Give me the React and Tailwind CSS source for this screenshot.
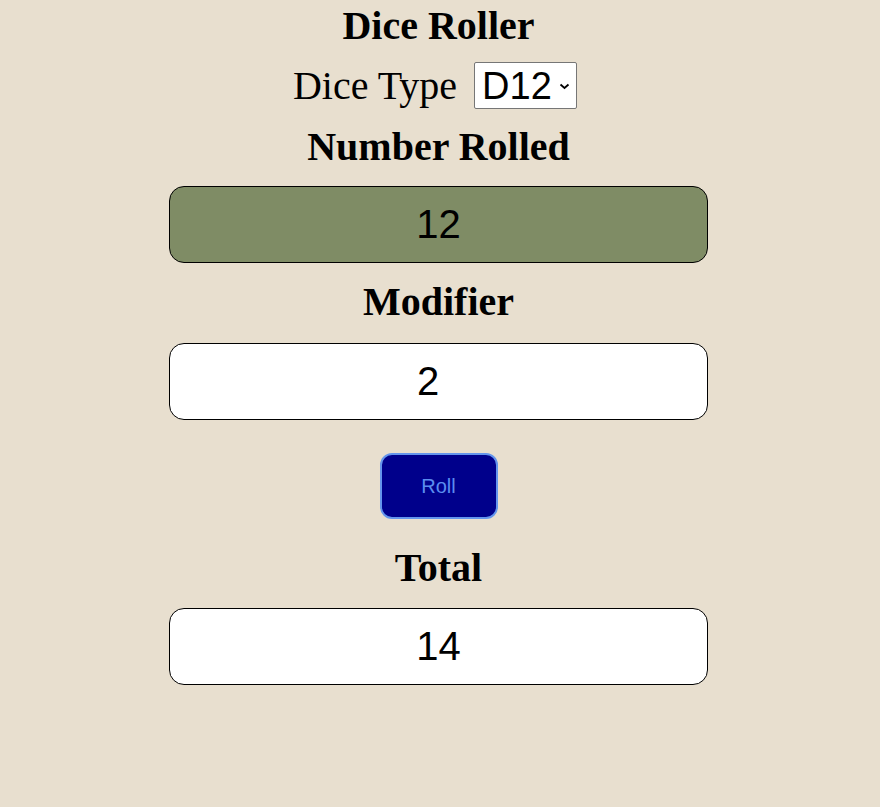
import React from "react";

const serif = { fontFamily: '"Liberation Serif", "Times New Roman", serif' };
const sans = { fontFamily: '"Liberation Sans", Arial, sans-serif' };

function Box({ value, className = "", textClass = "" }) {
  return (
    <div
      className={`w-[539px] h-[77px] border border-black rounded-[15px] flex items-center justify-center text-[40px] leading-[45px] text-black ${className}`}
      style={sans}
    >
      <span className={textClass}>{value}</span>
    </div>
  );
}

export default function App() {
  return (
    <div className="w-full min-h-screen bg-[#e8dfcf] text-black" style={serif}>
      <div className="w-[877px] flex flex-col items-center">
        <h1 className="h-[52px] leading-[52px] text-[40px] font-bold">Dice Roller</h1>
        <div className="mt-[10px] h-[47px] flex items-center gap-[17px] mr-[7px]">
          <span className="text-[40px] leading-[47px]">Dice Type</span>
          <div
            className="w-[103px] h-[47px] bg-white border border-[#767676] rounded-[2px] flex items-center pl-[7px] pr-[6px] justify-between"
            style={sans}
          >
            <span className="text-[38px] leading-[44px]">D12</span>
            <svg width="11" height="7" viewBox="0 0 11 7" className="mt-[1px]">
              <path d="M1.5 1.5 L5.5 5 L9.5 1.5" fill="none" stroke="#000" strokeWidth="1.8" />
            </svg>
          </div>
        </div>
        <h2 className="mt-[14px] h-[48px] leading-[48px] text-[40px] font-bold">Number Rolled</h2>
        <div className="mt-[15px]">
          <Box value="12" className="bg-[#7f8c65]" />
        </div>
        <h2 className="mt-[15px] h-[48px] leading-[48px] text-[40px] font-bold">Modifier</h2>
        <div className="mt-[17px]">
          <Box value="2" className="bg-white" textClass="mr-[21px]" />
        </div>
        <button
          className="mt-[33px] w-[118px] h-[66px] bg-[#00008b] border-2 border-[#6495ed] rounded-[12px] text-[20px] text-[#5b8def] flex items-center justify-center"
          style={sans}
        >
          Roll
        </button>
        <h2 className="mt-[25px] h-[48px] leading-[48px] text-[40px] font-bold">Total</h2>
        <div className="mt-[16px]">
          <Box value="14" className="bg-white" />
        </div>
      </div>
    </div>
  );
}
